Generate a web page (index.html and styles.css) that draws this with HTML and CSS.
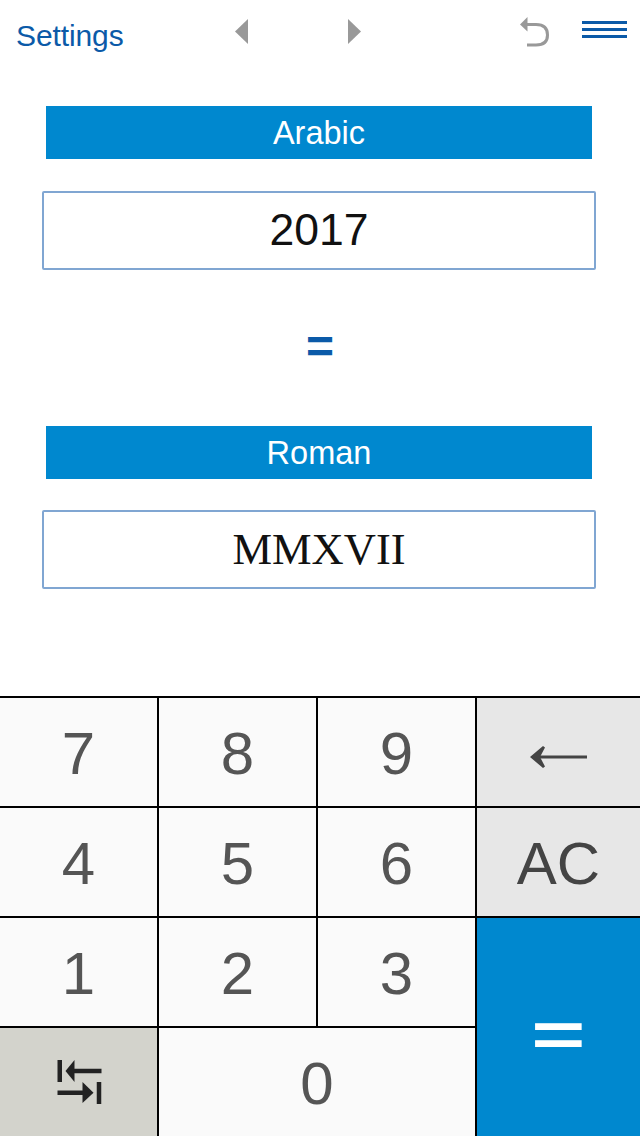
FILE: index.html
```html
<!DOCTYPE html>
<html lang="en">
	<head>
		<meta charset="UTF-8" />
		<meta name="viewport" content="width=device-width, initial-scale=1.0" />
		<title>Roman Numerals</title>
		<link rel="stylesheet" href="styles.css">
	</head>
	<body>
		<div class="toolbar">
			<span class="settings">Settings</span>
			<div class="arrows">
				<svg width="13" height="25" viewBox="0 0 13 25"><polygon points="13,0 13,25 0,12.5" fill="#999" /></svg>
				<svg width="13" height="25" viewBox="0 0 13 25"><polygon points="0,0 0,25 13,12.5" fill="#999" /></svg>
			</div>
			<svg class="undo" width="29" height="30" viewBox="0 0 29 30">
				<path d="M6 7.5H16Q27.5 7.5 27.5 18Q27.5 28 16 28H7" fill="none" stroke="#999" stroke-width="3" />
				<polygon points="7.5,0 7.5,14.5 0,7.5" fill="#999" />
			</svg>
			<div class="menu"><i></i><i></i><i></i></div>
		</div>
		<div class="converter">
			<div class="label">Arabic</div>
			<div class="field">2017</div>
			<div class="equals">=</div>
			<div class="label">Roman</div>
			<div class="field roman">MMXVII</div>
		</div>
		<div class="keypad">
			<div class="key">7</div>
			<div class="key">8</div>
			<div class="key">9</div>
			<div class="key grey">
				<svg class="back" width="58" height="22" viewBox="0 0 58 22">
					<path d="M8 11H57" stroke="#444" stroke-width="3" />
					<polygon points="0,11 13,0 15,1.5 10,11 15,20.5 13,22" fill="#444" />
				</svg>
			</div>
			<div class="key">4</div>
			<div class="key">5</div>
			<div class="key">6</div>
			<div class="key grey ac">AC</div>
			<div class="key">1</div>
			<div class="key">2</div>
			<div class="key">3</div>
			<div class="key blue"><span>=</span></div>
			<div class="key swap">
				<svg width="46" height="46" viewBox="0 0 46 46">
					<path d="M3.75 1V23M43 23V45" stroke="#222" stroke-width="4.5" />
					<path d="M15 12H45.5M1.5 33.7H28" stroke="#222" stroke-width="4.4" />
					<polygon points="18.5,1 18.5,23 9.5,12" fill="#222" />
					<polygon points="26.5,23 26.5,44 37.5,33.7" fill="#222" />
				</svg>
			</div>
			<div class="key zero">0</div>
		</div>
	</body>
</html>
```

FILE: styles.css
```css
* {
	box-sizing: border-box;
}
body {
	margin: 0;
	padding: 0;
	width: 640px;
	height: 1136px;
	overflow: hidden;
	display: flex;
	flex-direction: column;
	background-color: #fff;
	font-family: "Liberation Sans", Arial, sans-serif;
}
.toolbar {
	height: 64px;
	display: flex;
	align-items: flex-start;
	padding: 0 13px 0 16px;
}
.settings {
	flex: none;
	width: 219px;
	margin-top: 18px;
	font-size: 30px;
	line-height: 36px;
	letter-spacing: -0.1px;
	color: #0b5aa8;
}
.arrows {
	flex: none;
	width: 126px;
	margin-top: 19px;
	display: flex;
	justify-content: space-between;
}
.undo {
	flex: none;
	margin-top: 17px;
	margin-left: 159px;
}
.menu {
	flex: none;
	width: 45px;
	margin-top: 21px;
	margin-left: 33px;
	display: flex;
	flex-direction: column;
	gap: 4px;
}
.menu i {
	display: block;
	height: 3px;
	background-color: #0b5aa8;
}
.converter {
	flex: 1;
	display: flex;
	flex-direction: column;
	align-items: center;
	padding: 42px 2px 0 0;
}
.label {
	width: 546px;
	height: 53px;
	line-height: 55px;
	margin-bottom: 32px;
	text-align: center;
	font-size: 32.5px;
	color: #fff;
	background-color: #0088cf;
}
.field {
	width: 554px;
	height: 79px;
	line-height: 73px;
	text-align: center;
	font-size: 44.5px;
	color: #111;
	border: 2px solid #80a6d2;
	border-radius: 2px;
}
.roman {
	margin-top: -1px;
	line-height: 75px;
	font-family: "Liberation Serif", "Times New Roman", serif;
}
.equals {
	height: 156px;
	padding: 42px 0 0 2px;
	line-height: 70px;
	font-size: 48px;
	font-weight: bold;
	color: #0b5aa8;
}
.keypad {
	display: grid;
	grid-template-columns: 157px 157px 157px 163px;
	grid-template-rows: repeat(4, 108px);
	gap: 2px;
	border-top: 2px solid #000;
	background-color: #000;
}
.key {
	display: flex;
	align-items: center;
	justify-content: center;
	padding-top: 2px;
	font-size: 60px;
	color: #555;
	background-color: #fafafa;
}
.grey {
	background-color: #e7e7e7;
}
.back {
	margin-top: 8px;
}
.ac {
	color: #444;
}
.blue {
	grid-row: span 2;
	padding-top: 14px;
	font-size: 90px;
	font-weight: bold;
	color: #fff;
	background-color: #0088cf;
}
.blue span {
	display: block;
	transform: scale(1.03, 0.7);
}
.swap {
	padding-top: 0;
	background-color: #d3d3cc;
}
.zero {
	grid-column: span 2;
}
```
